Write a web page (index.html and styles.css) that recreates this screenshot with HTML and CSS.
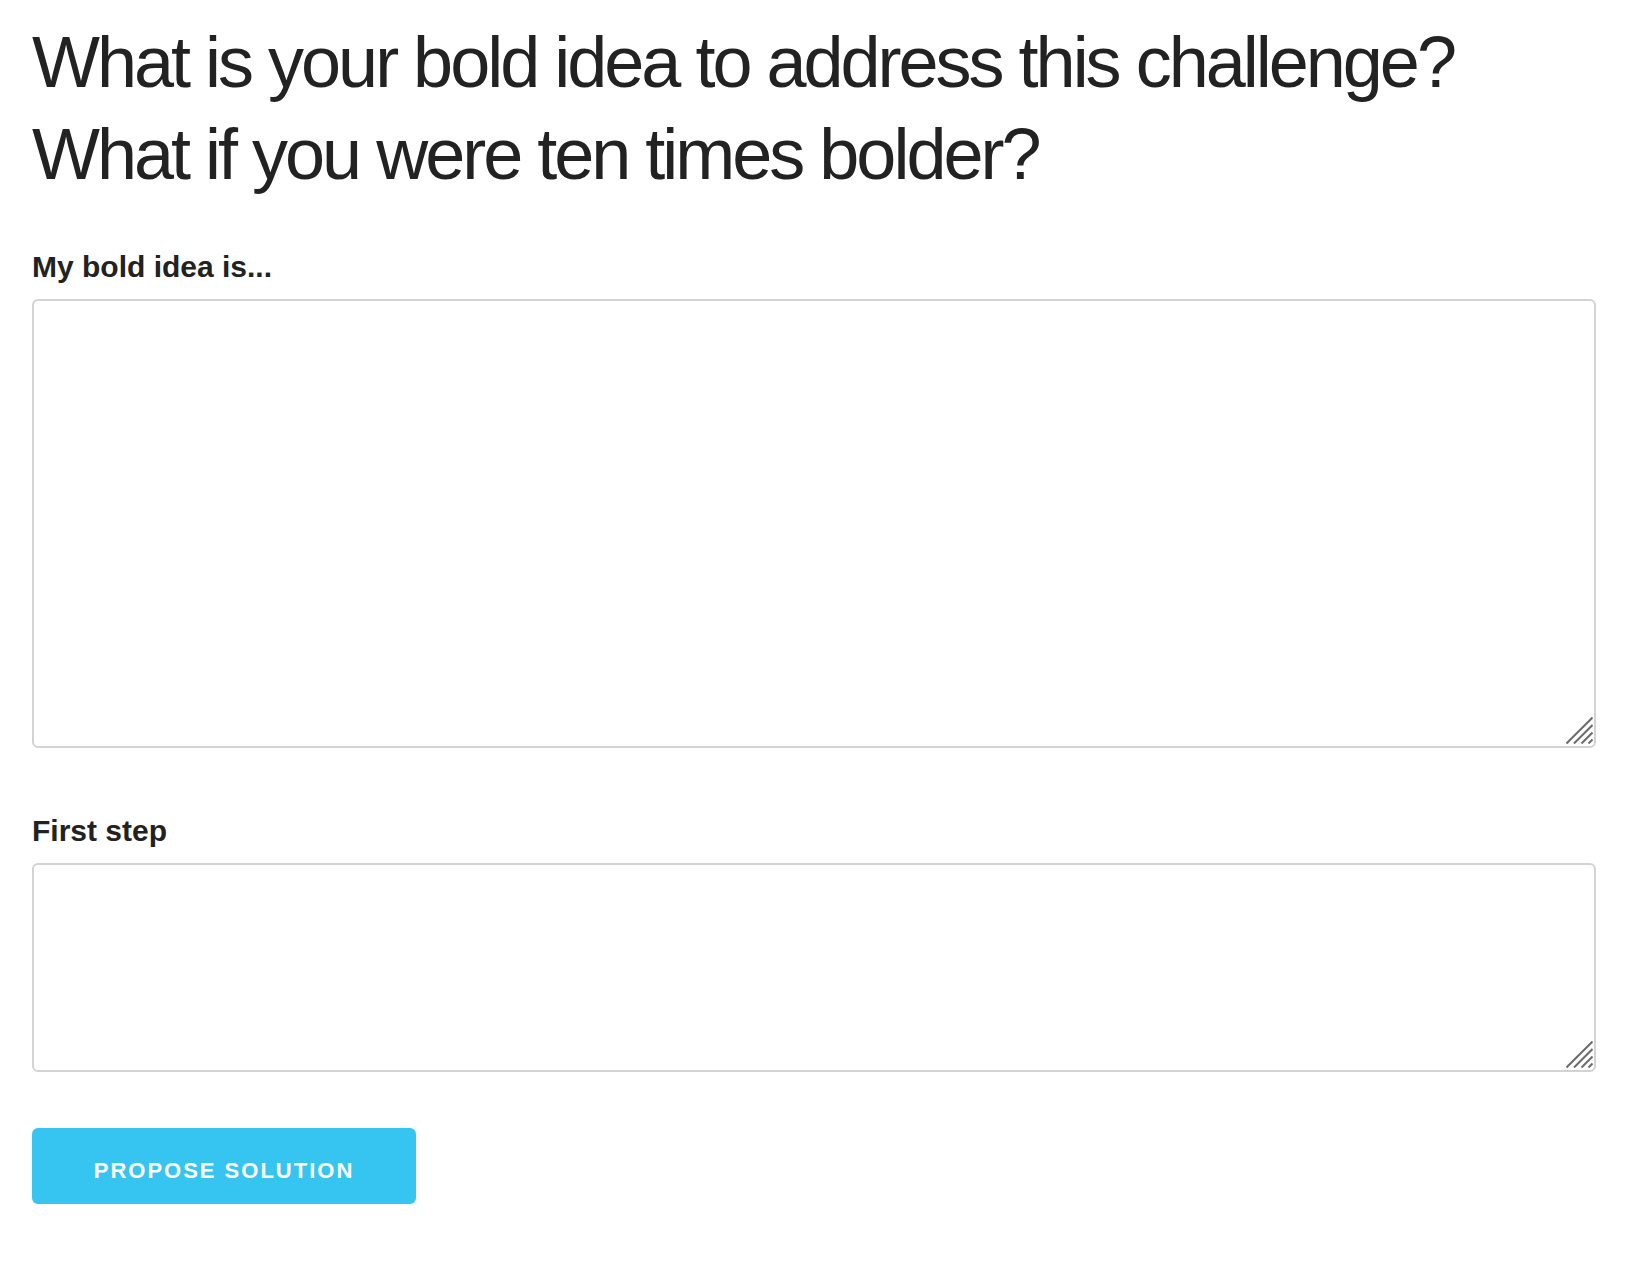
FILE: index.html
```html
<!DOCTYPE html>
<html lang="en">
<head>
<meta charset="utf-8">
<title>Propose solution</title>
<link rel="stylesheet" href="styles.css">
</head>
<body>
<main class="page">
  <h1 class="question">What is your bold idea to address this challenge?<br>What if you were ten times bolder?</h1>
  <form class="form">
    <div class="field field-idea">
      <label class="label" for="idea">My bold idea is...</label>
      <div class="area-wrap">
        <textarea id="idea" class="area area-large"></textarea>
        <svg class="grip" width="27" height="27" viewBox="0 0 27 27" aria-hidden="true">
          <g stroke="#6b6b6b" stroke-width="2" stroke-linecap="butt">
            <line x1="0.5" y1="26.5" x2="26.5" y2="0.5"/>
            <line x1="8" y1="26.5" x2="26.5" y2="8"/>
            <line x1="15.5" y1="26.5" x2="26.5" y2="15.5"/>
            <line x1="22.5" y1="26.5" x2="26.5" y2="22.5"/>
          </g>
        </svg>
      </div>
    </div>
    <div class="field field-step">
      <label class="label" for="step">First step</label>
      <div class="area-wrap">
        <textarea id="step" class="area area-small"></textarea>
        <svg class="grip" width="27" height="27" viewBox="0 0 27 27" aria-hidden="true">
          <g stroke="#6b6b6b" stroke-width="2" stroke-linecap="butt">
            <line x1="0.5" y1="26.5" x2="26.5" y2="0.5"/>
            <line x1="8" y1="26.5" x2="26.5" y2="8"/>
            <line x1="15.5" y1="26.5" x2="26.5" y2="15.5"/>
            <line x1="22.5" y1="26.5" x2="26.5" y2="22.5"/>
          </g>
        </svg>
      </div>
    </div>
    <button type="button" class="submit">PROPOSE SOLUTION</button>
  </form>
</main>
</body>
</html>
```

FILE: styles.css
```css
html, body {
  margin: 0;
  padding: 0;
  background: #ffffff;
}

body {
  font-family: "Liberation Sans", Arial, Helvetica, sans-serif;
  color: #222222;
}

.page {
  padding: 16px 56px 40px 32px;
}

.question {
  margin: 0;
  font-size: 72px;
  line-height: 92px;
  font-weight: 400;
  letter-spacing: -3px;
  color: #222222;
}

.form {
  display: flex;
  flex-direction: column;
  align-items: flex-start;
}

.field {
  align-self: stretch;
  display: flex;
  flex-direction: column;
}

.field-idea {
  margin-top: 49px;
}

.field-step {
  margin-top: 65px;
}

.label {
  display: block;
  font-size: 30px;
  line-height: 35px;
  font-weight: 700;
  color: #222222;
  margin-bottom: 15px;
}

.area-wrap {
  position: relative;
}

.area {
  display: block;
  box-sizing: border-box;
  width: 100%;
  margin: 0;
  border: 2px solid #d3d3d3;
  border-radius: 6px;
  background: #ffffff;
  resize: none;
  outline: none;
  font-family: inherit;
  font-size: 18px;
  padding: 10px 12px;
}

.area-large {
  height: 449px;
}

.area-small {
  height: 209px;
}

.grip {
  position: absolute;
  right: 3px;
  bottom: 4px;
  pointer-events: none;
}

.submit {
  margin-top: 56px;
  box-sizing: border-box;
  width: 384px;
  height: 76px;
  padding: 10px 2px 0 2px;
  display: flex;
  align-items: center;
  justify-content: center;
  border: none;
  border-radius: 6px;
  background: #36c5f0;
  color: #ffffff;
  font-family: "Liberation Sans", Arial, Helvetica, sans-serif;
  font-size: 22px;
  font-weight: 700;
  letter-spacing: 2px;
  cursor: pointer;
}
```
